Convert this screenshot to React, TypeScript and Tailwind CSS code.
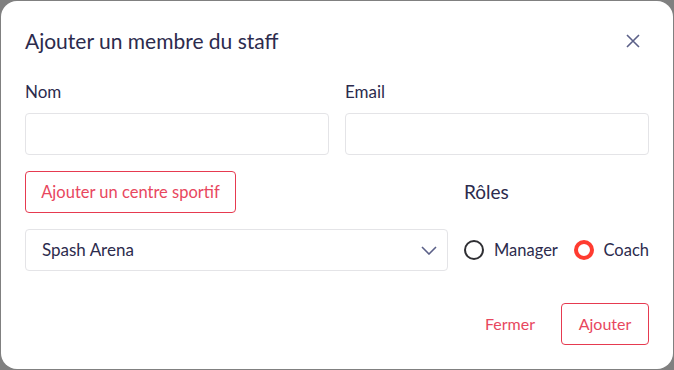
import { useState } from 'react';

const font = { fontFamily: 'Lato, "Noto Sans", sans-serif' };

function Radio({ label, checked, onClick }: { label: string; checked: boolean; onClick: () => void }) {
  return (
    <button type="button" onClick={onClick} className="flex items-center gap-[10px]">
      {checked ? (
        <span className="w-[20px] h-[20px] rounded-full border-[4px] border-[#ff3b30] box-border" />
      ) : (
        <span className="w-[20px] h-[20px] rounded-full border-2 border-[#2f2f33] box-border" />
      )}
      <span className="text-[16.5px] text-[#2c2b4d] leading-none">{label}</span>
    </button>
  );
}

export default function App() {
  const [role, setRole] = useState('Coach');

  return (
    <div className="w-[674px] h-[370px] bg-[#808080] p-px overflow-hidden" style={font}>
      <div className="w-full h-full bg-white rounded-[16px] px-6 pt-[26px] pb-6 flex flex-col">
        {/* Header */}
        <div className="flex items-center justify-between h-[28px]">
          <h2 className="text-[21px] leading-[28px] text-[#2c2b4d]">Ajouter un membre du staff</h2>
          <button type="button" className="mr-[9px] text-[#5b6088]">
            <svg width="14" height="14" viewBox="0 0 14 14" fill="none" stroke="currentColor" strokeWidth="1.6">
              <path d="M1 1L13 13M13 1L1 13" />
            </svg>
          </button>
        </div>

        {/* Nom / Email */}
        <div className="grid grid-cols-2 gap-4 mt-[26px]">
          <div className="flex flex-col">
            <label className="text-[17px] leading-[22px] text-[#2c2b4d] mb-[10px]">Nom</label>
            <input className="h-[42px] border border-[#e4e4e7] rounded-[4px] px-4 outline-none" />
          </div>
          <div className="flex flex-col">
            <label className="text-[17px] leading-[22px] text-[#2c2b4d] mb-[10px]">Email</label>
            <input className="h-[42px] border border-[#e4e4e7] rounded-[4px] px-4 outline-none" />
          </div>
        </div>

        {/* Centre sportif + rôles */}
        <div className="flex gap-4 mt-4">
          <div className="flex-1 flex flex-col gap-4 items-start">
            <button
              type="button"
              className="h-[42px] w-[211px] border border-[#e63a50] rounded-[4px] text-[16.5px] text-[#e8475e]"
            >
              Ajouter un centre sportif
            </button>
            <div className="w-full h-[42px] border border-[#e4e4e7] rounded-[4px] flex items-center justify-between pl-4 pr-[10px]">
              <span className="text-[17px] text-[#2c2b4d]">Spash Arena</span>
              <svg width="16" height="9" viewBox="0 0 16 9" fill="none" stroke="#5b6088" strokeWidth="1.6">
                <path d="M1 1L8 8L15 1" />
              </svg>
            </div>
          </div>
          <div className="w-[185px] flex flex-col gap-4">
            <div className="h-[42px] flex items-center">
              <span className="text-[19px] text-[#2c2b4d]">Rôles</span>
            </div>
            <div className="h-[42px] flex items-center justify-between">
              <Radio label="Manager" checked={role === 'Manager'} onClick={() => setRole('Manager')} />
              <Radio label="Coach" checked={role === 'Coach'} onClick={() => setRole('Coach')} />
            </div>
          </div>
        </div>

        {/* Footer */}
        <div className="mt-auto flex items-center justify-end gap-[26px]">
          <button type="button" className="text-[16px] text-[#e8475e]">Fermer</button>
          <button
            type="button"
            className="h-[42px] w-[88px] border border-[#e63a50] rounded-[4px] text-[16px] text-[#e8475e]"
          >
            Ajouter
          </button>
        </div>
      </div>
    </div>
  );
}
